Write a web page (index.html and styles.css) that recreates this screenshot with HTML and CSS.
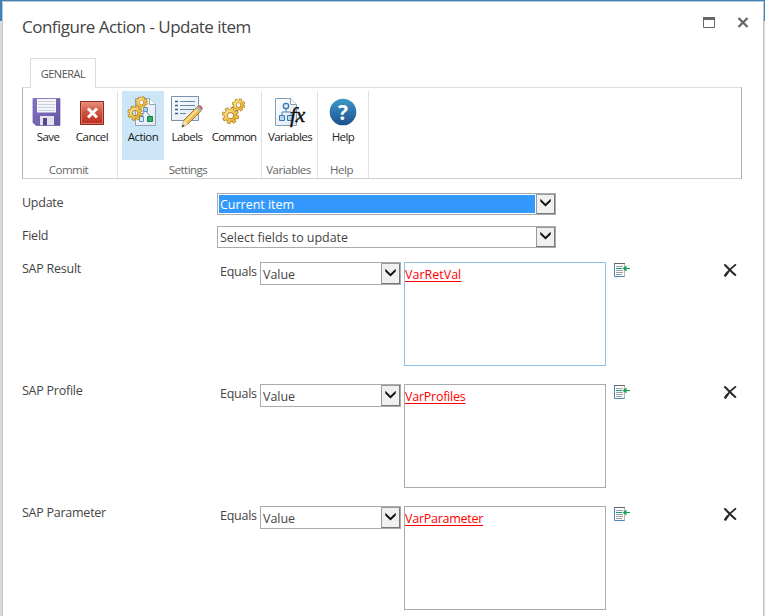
FILE: index.html
```html
<!DOCTYPE html>
<html lang="en">
<head>
<meta charset="utf-8">
<title>Configure Action - Update item</title>
<link rel="stylesheet" href="styles.css">
</head>
<body>
<svg class="defs" width="0" height="0" aria-hidden="true">
  <defs>
    <linearGradient id="gold" x1="0" y1="0" x2="1" y2="1"><stop offset="0" stop-color="#ffe58a"/><stop offset="1" stop-color="#e0a526"/></linearGradient>
    <linearGradient id="red" x1="0" y1="0" x2="0" y2="1"><stop offset="0" stop-color="#e8917f"/><stop offset=".45" stop-color="#d25543"/><stop offset="1" stop-color="#b92c1c"/></linearGradient>
    <linearGradient id="blue" x1="0" y1="0" x2="0" y2="1"><stop offset="0" stop-color="#3c9ac9"/><stop offset="1" stop-color="#1d4f8d"/></linearGradient>
    <linearGradient id="purple" x1="0" y1="0" x2="1" y2="1"><stop offset="0" stop-color="#8573cb"/><stop offset="1" stop-color="#67549f"/></linearGradient>
    <linearGradient id="page" x1="0" y1="0" x2="1" y2="1"><stop offset="0" stop-color="#fff"/><stop offset="1" stop-color="#dce7f2"/></linearGradient>
    <symbol id="gear" viewBox="0 0 18 18">
      <g fill="none">
        <circle cx="9" cy="9" r="6.9" stroke="#a87516" stroke-width="3.4" stroke-dasharray="3.3 2.12"/>
        <circle cx="9" cy="9" r="4.7" stroke="#a87516" stroke-width="4.2"/>
        <circle cx="9" cy="9" r="6.7" stroke="#f4cb50" stroke-width="2.4" stroke-dasharray="2.1 3.16" stroke-dashoffset="-.6"/>
        <circle cx="9" cy="9" r="4.7" stroke="url(#gold)" stroke-width="2.9"/>
      </g>
    </symbol>
    <symbol id="arrow" viewBox="0 0 18 19"><path d="M3.500 5v3l5.500 5.200L14.500 8V5L9 10.200z" fill="#111"/></symbol>
    <symbol id="insert" viewBox="0 0 17 17">
      <path d="M1.5 1.5h10v13h-10z" fill="#fff" stroke="#4a86bd"/>
      <path d="M1 1.5h11" stroke="#666"/><path d="M11.5 2v12" stroke="#b6b6b6"/>
      <path d="M3 4.5h7M3 8.5h7M3 10.5h7M3 12.5h6" stroke="#a0a0a0"/>
      <path d="M3 6.5h6M10 6.5h7" stroke="#14a05a"/><path d="M9.500 6.5l4-3v6z" fill="#14a05a"/>
    </symbol>
    <symbol id="cross" viewBox="0 0 14 14"><path d="M2 2C5 5 8 8.500 12.300 12" fill="none" stroke="#2b2b2b" stroke-width="2.100" stroke-linecap="round"/><path d="M12.500 1.800C8 5 5 8 2.300 12.500" fill="none" stroke="#2b2b2b" stroke-width="1.700" stroke-linecap="round"/><path d="M4.500 9.500L2.300 12.500" stroke="#2b2b2b" stroke-width="2.400" stroke-linecap="round"/></symbol>
  </defs>
</svg>
<main class="dialog">
  <header class="titlebar">
    <h1 class="title">Configure Action - Update item</h1>
    <svg class="win-max" width="12" height="11" viewBox="0 0 12 11"><path d="M.5.5h11v10H.5z" fill="#fff" stroke="#666"/><path d="M0 0h12v3H0z" fill="#666"/></svg>
    <svg class="win-close" width="12" height="11" viewBox="0 0 12 11"><path d="M1.500 1l9 9M10.500 1l-9 9" stroke="#666" stroke-width="2.300"/></svg>
  </header>
  <nav class="tabs"><span class="tab">GENERAL</span></nav>
  <section class="ribbon">
    <div class="group commit">
      <div class="buttons">
        <div class="btn">
          <svg class="icon" viewBox="0 0 32 32"><path d="M1 2.500h27v27H4l-3-3z" fill="url(#purple)"/><path d="M5 2.500h19v14H5z" fill="#f3f6fa"/><path d="M6 5.500h17M6 8.500h17M6 11.500h17M6 14.500h17" stroke="#c7d0dc"/><path d="M8 20h14v9.500H8z" fill="#dfe3ea"/><path d="M11 22h4v7.500h-4z" fill="#56488c"/><path d="M1 2.500h27v27H4l-3-3z" fill="none" stroke="#6a5aa8" stroke-width=".7"/></svg>
          <span>Save</span></div>
        <div class="btn">
          <svg class="icon" viewBox="0 0 32 32"><path d="M4.500 5.500h23v23h-23z" fill="url(#red)" stroke="#8f291d"/><path d="M5.500 6.500h21v21h-21z" fill="none" stroke="#e88e7f" stroke-width=".7"/><path d="M12 12.500l9 9M21 12.500l-9 9" stroke="#fff" stroke-width="2.900"/></svg>
          <span>Cancel</span></div>
      </div>
      <div class="caption">Commit</div>
    </div>
    <div class="group settings">
      <div class="buttons">
        <div class="btn active">
          <svg class="icon" viewBox="0 0 32 32"><path d="M8.500 2.500h14l6 6v21h-20z" fill="url(#page)" stroke="#94a5b8"/><path d="M22.500 2.500v6h6" fill="#fff" stroke="#94a5b8"/><path d="M18 14l-3 6M18 14l5 6" fill="none" stroke="#5f91bf"/><path d="M16.500 11.500h4v4h-4z" fill="#a9cdee" stroke="#5f91bf"/><path d="M20.500 20.500h5v5h-5z" fill="#2fb15c" stroke="#208244"/><path d="M12.500 20.500h4v5h-4z" fill="#d3e7f8" stroke="#5f91bf"/><use href="#gear" x="8" y="0" width="13" height="13"/><use href="#gear" x="0" y="9" width="16" height="16"/></svg>
          <span>Action</span></div>
        <div class="btn">
          <svg class="icon" viewBox="0 0 32 32"><path d="M.500.500h27v24H.500z" fill="url(#page)" stroke="#7892ad"/><path d="M4 5.500h3M4 9.500h3M4 13.500h3M4 17.500h3" stroke="#315d91" stroke-width="1.500"/><path d="M9 5.500h15M9 9.500h15M9 13.500h14M9 17.500h6" stroke="#6684a4"/><path d="M27 10l4 4-14 14-6 3 2-7z" fill="#edbc4e" stroke="#8b6427" stroke-width=".8"/><path d="M15 25L28 12" stroke="#ffe79b" stroke-width="1.400"/><path d="M27 10l2-1 3 3-1 2z" fill="#cf5a5b"/><path d="M25 12l2-2 4 4-2 2z" fill="#a3b4bd"/><path d="M13 24l4 4-6 3z" fill="#f5dfb6"/><path d="M11.800 28.500l1.800 1.500-2.800 1.200z" fill="#333"/></svg>
          <span>Labels</span></div>
        <div class="btn wide">
          <svg class="icon" viewBox="0 0 32 32"><use href="#gear" x="13.500" y="2" width="14" height="14"/><use href="#gear" x="3.500" y="10.500" width="18" height="18"/></svg>
          <span>Common</span></div>
      </div>
      <div class="caption">Settings</div>
    </div>
    <div class="group variables">
      <div class="buttons">
        <div class="btn xwide">
          <svg class="icon" viewBox="0 0 32 32"><path d="M1.500 2.500h15l6 6v21h-21z" fill="url(#page)" stroke="#899eb3"/><path d="M16.500 2.500v6h6" fill="#fff" stroke="#899eb3"/><path d="M12 12v4M8 20v-4h9v4" fill="none" stroke="#5386b6"/><circle cx="12" cy="10" r="2.700" fill="#d6eafa" stroke="#3978b4" stroke-width="1.300"/><path d="M5.500 19.500h5v5h-5zM13.500 19.500h5v5h-5z" fill="#b9d9f2" stroke="#3978b4"/><text x="16" y="25.500" class="fx">fx</text></svg>
          <span>Variables</span></div>
      </div>
      <div class="caption">Variables</div>
    </div>
    <div class="group help">
      <div class="buttons">
        <div class="btn">
          <svg class="icon" viewBox="0 0 32 32"><circle cx="16" cy="16" r="13.300" fill="url(#blue)"/><text x="16" y="23.500" class="question" text-anchor="middle">?</text></svg>
          <span>Help</span></div>
      </div>
      <div class="caption">Help</div>
    </div>
  </section>
  <section class="form">
    <div class="row"><label class="name">Update</label><div class="select long selected"><span class="value">Current item</span><span class="drop"><svg width="17" height="18"><use href="#arrow"/></svg></span></div></div>
    <div class="row"><label class="name">Field</label><div class="select long"><span class="value">Select fields to update</span><span class="drop"><svg width="17" height="18"><use href="#arrow"/></svg></span></div></div>
    <div class="row field"><label class="name">SAP Result</label><span class="equals">Equals</span><div class="select short"><span class="value">Value</span><span class="drop"><svg width="17" height="18"><use href="#arrow"/></svg></span></div><div class="editor focus"><span class="var v1">VarRetVal</span></div><svg class="insert"><use href="#insert"/></svg><svg class="remove"><use href="#cross"/></svg></div>
    <div class="row field"><label class="name">SAP Profile</label><span class="equals">Equals</span><div class="select short"><span class="value">Value</span><span class="drop"><svg width="17" height="18"><use href="#arrow"/></svg></span></div><div class="editor"><span class="var">VarProfiles</span></div><svg class="insert"><use href="#insert"/></svg><svg class="remove"><use href="#cross"/></svg></div>
    <div class="row field"><label class="name">SAP Parameter</label><span class="equals">Equals</span><div class="select short"><span class="value">Value</span><span class="drop"><svg width="17" height="18"><use href="#arrow"/></svg></span></div><div class="editor"><span class="var">VarParameter</span></div><svg class="insert"><use href="#insert"/></svg><svg class="remove"><use href="#cross"/></svg></div>
  </section>
</main>
</body>
</html>
```
FILE: styles.css
```css
* { box-sizing: border-box; }
html, body { height: 100%; }
body {
  margin: 0;
  padding: 1px 1px 0 2px;
  overflow: hidden;
  background: linear-gradient(#3b83bd 0 21px, #dadada 21px);
  font: 12.5px/18px "Open Sans", "Noto Sans", sans-serif;
  letter-spacing: -0.25px;
  color: #444;
  white-space: nowrap;
}
.defs { position: absolute; }
.dialog { height: 615px; padding: 0 20px 0 19px; overflow: hidden; background: #fff; border: 1px solid #c3c7ca; border-bottom: 0; }
.titlebar { display: flex; height: 56px; padding-top: 13px; align-items: flex-start; }
.title { flex: 1; margin: 0; font-size: 17px; line-height: 24px; font-weight: 400; letter-spacing: -0.52px; color: #444; }
.win-max { margin: 2px 23px 0 0; }
.win-close { margin: 2px -6px 0 -1px; }
.tabs { display: flex; height: 30px; padding-left: 8px; }
.tab { z-index: 1; width: 66px; height: 30px; border: 1px solid #dcdcdc; border-bottom: 0; background: #fff; text-align: center; line-height: 29px; font-size: 11px; letter-spacing: -0.5px; color: #555; }
.ribbon { display: flex; width: 720px; height: 92px; margin-top: -1px; border: 1px solid #dcdcdc; border-left-color: #b4b4b4; border-right-color: #aaa; border-bottom-color: #cfcfcf; }
.group { display: flex; flex-direction: column; margin-top: 3px; border-right: 1px solid #e1e1e1; }
.commit { width: 95px; }
.settings { width: 144px; }
.variables { width: 56px; }
.help { width: 51px; }
.buttons { display: flex; gap: 2px; padding-left: 4px; }
.variables .buttons { padding-left: 3px; }
.btn { display: flex; flex-direction: column; align-items: center; width: 42px; height: 69px; padding-top: 5px; font-size: 11.5px; letter-spacing: -0.55px; line-height: 18px; color: #222; }
.btn.wide { width: 48px; letter-spacing: -0.85px; }
.btn.xwide { width: 50px; }
.active { background: #cde6f7; }
.icon { width: 32px; height: 32px; flex: none; }
.fx { font: italic 22px "Liberation Serif", serif; letter-spacing: -0.5px; fill: #111; stroke: #111; stroke-width: 0.4px; }
.question { font: bold 21px "Open Sans", sans-serif; letter-spacing: 0; fill: #fff; }
.caption { margin-top: 1px; padding-right: 3px; text-align: center; font-size: 11.5px; letter-spacing: -0.5px; color: #666; }
.variables .caption { padding-right: 2px; }
.form { padding-top: 13px; }
.row { display: flex; height: 33px; align-items: flex-start; }
.row.field { height: 122px; padding-top: 5px; }
.name { width: 195px; margin-top: 2px; }
.field .name { width: 198px; margin-top: -3px; }
.select { display: flex; height: 22px; border: 1px solid #ababab; background: #fff; margin-top: 1px; letter-spacing: -0.03px; }
.long { width: 339px; }
.short { width: 141px; height: 23px; margin-top: -1px; }
.value { flex: 1; padding-left: 2px; line-height: 21px; }
.short .value { line-height: 23px; }
.selected .value { margin: 1px; padding-left: 1px; background: #3399ff; color: #fff; line-height: 19px; }
.drop { width: 19px; border: 1px solid #9a9a9a; border-right-color: #777; border-bottom-color: #777; background: #f0f0f0; }
.long .drop svg { margin-top: -1px; }
.drop svg { display: block; }
.equals { width: 40px; }
.editor { width: 202px; height: 104px; margin: -1px 0 0 3px; padding-top: 3px; border: 1px solid #ababab; }
.focus { border-color: #92c0e0; }
.var { color: #f00; text-decoration: underline; text-underline-offset: 2px; text-decoration-skip-ink: none; }
.v1 { letter-spacing: 0; }
.insert { width: 17px; height: 17px; margin: -1px 0 0 7px; }
.remove { width: 14px; height: 14px; margin: 0 0 0 93px; }
```
